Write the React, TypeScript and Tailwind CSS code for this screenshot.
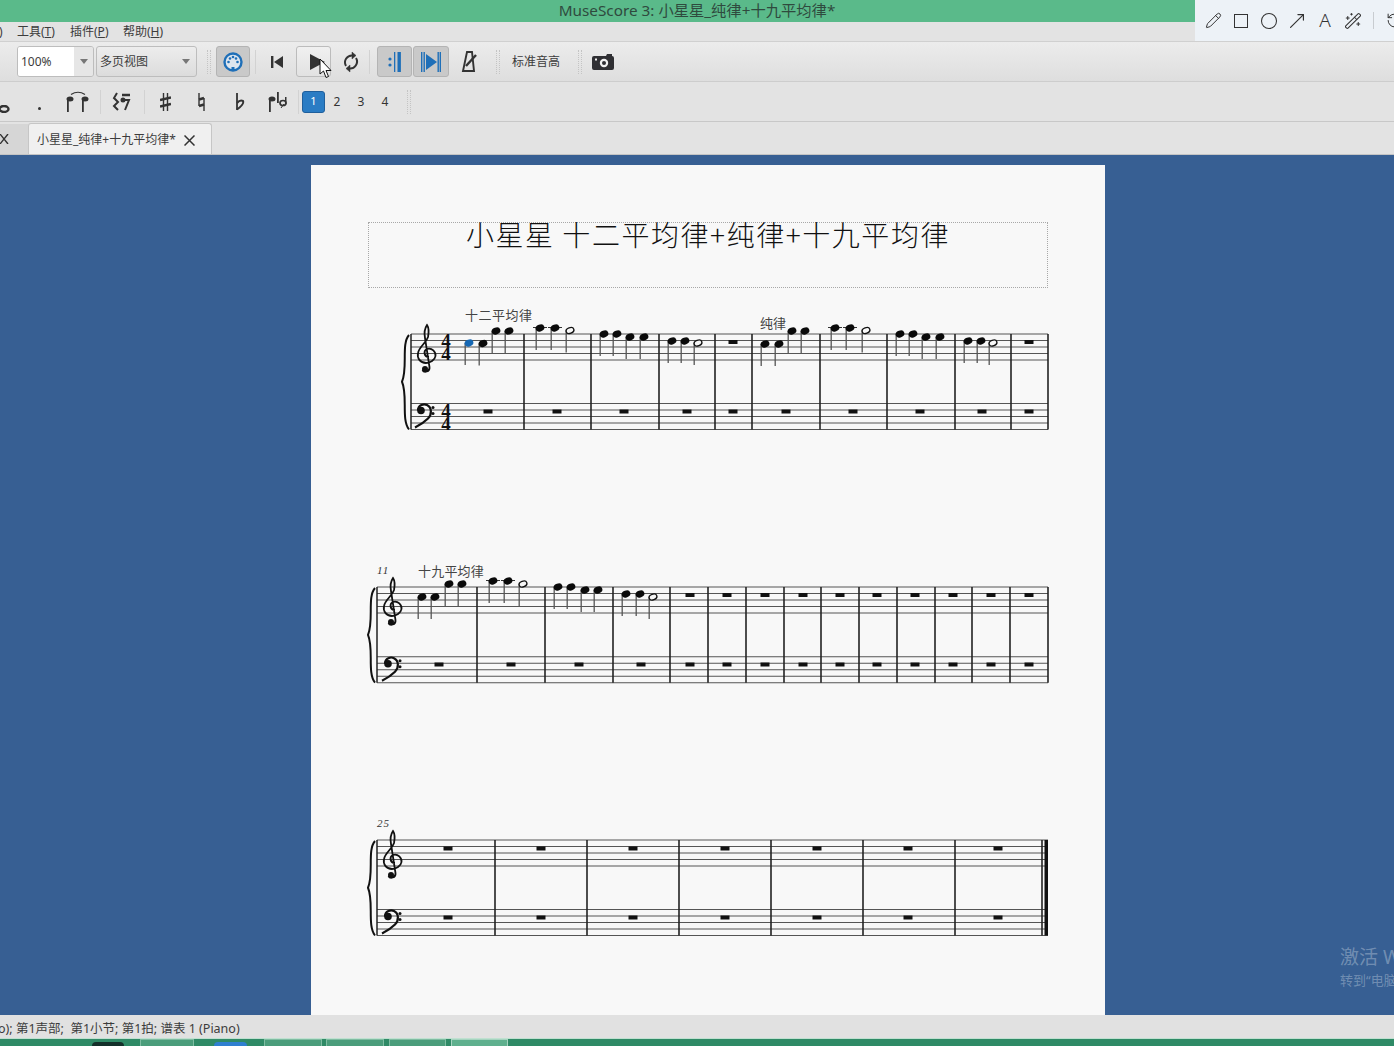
import { Circle, MoveUpRight, Pencil, RotateCcw, WandSparkles } from "lucide-react";

type N = [number, number, boolean?];

const T = ({ x, t }: { x: number; t: number }) => (
  <g transform={`translate(${x} ${t})`} fill="none" stroke="#111">
    <path strokeWidth="1.800" d="M2 23C-3 23-4 17 0 15C5 13.500 9 18 8.500 22C8 26 3 29-1 29C-7 29-10 24-9 19C-8 13-1 9 1 3C2-2 2-6 0-9C-2-6-3-1-2 4L2.500 33C3 38-3 39-4.500 36" />
    <circle cx="-2" cy="35" r="3" fill="#111" stroke="none" />
  </g>
);
const B = ({ x, t }: { x: number; t: number }) => (
  <g transform={`translate(${x} ${t})`} fill="#111">
    <path fill="none" stroke="#111" strokeWidth="2.200" d="M-3 7C-3 1 3 0 6 1.500C11 4 11 11 7 15C3 19-2 22-6 24" />
    <circle cx="0" cy="7" r="3.800" />
    <circle cx="12" cy="4" r="1.500" />
    <circle cx="12" cy="10" r="1.500" />
  </g>
);

function System(props: {
  top: number;
  height: number;
  t: number;
  b: number;
  x0: number;
  bars: number[];
  notes: N[];
  halves: N[];
  rests: number[];
  restY: number;
  bassRests: number[];
  bassY: number;
  clefX: number;
  bassX: number;
  final?: boolean;
  time?: boolean;
  mt: string;
  children?: React.ReactNode;
}) {
  const { t, b, x0 } = props;
  const lines = [0, 1, 2, 3, 4];
  return (
    <svg
      className={`block ${props.mt}`}
      width="794"
      height={props.height}
      viewBox={`311 ${props.top} 794 ${props.height}`}
    >
      {lines.map((i) => (
        <g key={i} stroke="#555" strokeWidth="1.100">
          <line x1={x0} x2="1048" y1={t + i * 6.5} y2={t + i * 6.5} />
          <line x1={x0} x2="1048" y1={b + i * 6.5} y2={b + i * 6.5} />
        </g>
      ))}
      <line x1={x0} x2={x0} y1={t} y2={b + 26} stroke="#222" strokeWidth="1.500" />
      {props.bars.map((x) => (
        <line key={x} x1={x} x2={x} y1={t} y2={b + 26} stroke="#222" strokeWidth="1.600" />
      ))}
      {props.final && <rect x="1044.5" y={t} width="3.5" height={b + 26 - t} fill="#111" />}
      <path
        d={`M${x0 - 2} ${t + 1}C${x0 - 10} ${t + 10} ${x0 - 3} ${t + 34} ${x0 - 9} ${(t + b + 26) / 2}C${x0 - 3} ${b - 8} ${x0 - 10} ${b + 16} ${x0 - 2} ${b + 26}`}
        fill="none"
        stroke="#111"
        strokeWidth="2"
      />
      <T x={props.clefX} t={t} />
      <B x={props.bassX} t={b} />
      {props.time &&
        [t + 13, t + 26, b + 13, b + 26].map((y) => (
          <text key={y} x="446" y={y} textAnchor="middle" fontFamily="'Liberation Serif',serif" fontWeight="700" fontSize="19" fill="#111">
            4
          </text>
        ))}
      {props.notes.map(([x, y, blue]) => (
        <g key={x}>
          <line x1={x - 3.8} x2={x - 3.8} y1={y} y2={y + 22} stroke="#555" strokeWidth="1.300" />
          {y < t - 3 && <line x1={x - 7} x2={x + 7} y1={t - 6.5} y2={t - 6.5} stroke="#333" />}
          <ellipse cx={x} cy={y} rx="4.500" ry="3.400" transform={`rotate(-20 ${x} ${y})`} fill={blue ? "#1668b4" : "#0a0a0a"} />
        </g>
      ))}
      {props.halves.map(([x, y]) => (
        <g key={x}>
          <line x1={x - 3.8} x2={x - 3.8} y1={y} y2={y + 22} stroke="#555" strokeWidth="1.300" />
          <ellipse cx={x} cy={y} rx="4" ry="2.800" transform={`rotate(-20 ${x} ${y})`} fill="#f8f8f8" stroke="#111" strokeWidth="1.400" />
        </g>
      ))}
      {props.rests.map((x) => (
        <rect key={x} x={x - 4.5} y={props.restY - 2} width="9" height="4" fill="#111" />
      ))}
      {props.bassRests.map((x) => (
        <rect key={x} x={x - 4.5} y={props.bassY - 2} width="9" height="4" fill="#111" />
      ))}
      {props.children}
    </svg>
  );
}

const Grip = ({ className = "" }: { className?: string }) => (
  <div className={`h-[24px] w-[4px] border-x border-dotted border-[#c4c4c4] ${className}`} />
);
const Sep = ({ className = "" }: { className?: string }) => <div className={`h-[24px] w-px bg-[#d2d2d2] ${className}`} />;

const labelFont = "'Noto Sans CJK SC',sans-serif";

export default function App() {
  return (
    <div className="relative flex h-[1046px] w-[1394px] flex-col overflow-hidden bg-[#e3e3e3] font-['Noto_Sans','Noto_Sans_CJK_SC',sans-serif] text-[#3c3c3c]">
      {/* title */}
      <div className="flex h-[22px] shrink-0 items-center justify-center bg-[#5aba8a] pb-[1px] text-[15.300px] leading-none text-[#2f4a3e]">
        MuseScore 3: 小星星_纯律+十九平均律*
      </div>
      {/* menu */}
      <div className="flex h-[20px] shrink-0 items-center border-b border-[#d0d0d0] text-[12px] leading-none">
        <span className="-ml-[1px] w-[18px]">)</span>
        <span className="w-[53px]">工具(<u>T</u>)</span>
        <span className="w-[53px]">插件(<u>P</u>)</span>
        <span>帮助(<u>H</u>)</span>
      </div>
      {/* toolbar */}
      <div className="flex h-[40px] shrink-0 items-center border-b border-[#cdcdcd] bg-gradient-to-b from-[#ececec] to-[#dedede]">
        <div className="ml-[17px] flex h-[31px] w-[77px] overflow-hidden rounded-[3px] border border-[#bdbdbd] text-[12px]">
          <div className="flex w-[56px] items-center bg-white pl-[3px]">100%</div>
          <div className="flex flex-1 items-center justify-center bg-[#e6e6e6]">
            <div className="h-0 w-0 border-x-[4px] border-t-[5px] border-x-transparent border-t-[#777]" />
          </div>
        </div>
        <div className="ml-[2px] flex h-[31px] w-[101px] items-center justify-between rounded-[3px] border border-[#bdbdbd] bg-gradient-to-b from-[#ededed] to-[#dcdcdc] pl-[3px] pr-[6px] text-[12px]">
          多页视图
          <div className="h-0 w-0 border-x-[4px] border-t-[5px] border-x-transparent border-t-[#777]" />
        </div>
        <Grip className="ml-[10px]" />
        <div className="ml-[5px] flex h-[31px] w-[34px] items-center justify-center rounded-[3px] border border-[#b4b4b4] bg-[#c9c9c9]">
          <svg width="22" height="22" viewBox="0 0 22 22">
            <circle cx="11" cy="11" r="8.5" fill="#dfe6ee" stroke="#1f6fb8" strokeWidth="2.4" />
            <g fill="#1f6fb8">
              <circle cx="6.5" cy="11" r="1.3" />
              <circle cx="15.5" cy="11" r="1.3" />
              <circle cx="8" cy="7.5" r="1.3" />
              <circle cx="14" cy="7.5" r="1.3" />
              <circle cx="11" cy="6" r="1.3" />
              <rect x="9.5" y="16" width="3" height="3" />
            </g>
          </svg>
        </div>
        <Sep className="ml-[5px]" />
        <svg className="ml-[14px]" width="14" height="14" viewBox="0 0 14 14">
          <rect x="1" y="1" width="2.4" height="12" fill="#333" />
          <path d="M13 1V13L4 7Z" fill="#333" />
        </svg>
        <div className="ml-[12px] flex h-[31px] w-[35px] items-center rounded-[3px] border border-[#bcbcbc] bg-gradient-to-b from-[#f0f0f0] to-[#e2e2e2] pl-[13px]">
          <svg width="15" height="16" viewBox="0 0 15 16">
            <path d="M0 0V16L15 8Z" fill="#333" />
          </svg>
        </div>
        <svg className="ml-[10px]" width="20" height="22" viewBox="0 0 20 22" fill="none" stroke="#333" strokeWidth="2">
          <path d="M5 15A7 7 0 0 1 12 4.5" />
          <path d="M15 7A7 7 0 0 1 8 17.500" />
          <path d="M11 1L15 4.500L11 8Z" fill="#333" strokeWidth="0.5" />
          <path d="M9 14L5 17.500L9 21Z" fill="#333" strokeWidth="0.5" />
        </svg>
        <Sep className="ml-[8px]" />
        <div className="ml-[7px] flex h-[31px] w-[35px] items-center justify-center rounded-[3px] border border-[#b4b4b4] bg-[#c9c9c9]">
          <svg width="14" height="20" viewBox="0 0 14 20" fill="#1f6fb8">
            <circle cx="2" cy="7" r="1.6" />
            <circle cx="2" cy="13" r="1.6" />
            <rect x="6" y="0" width="1.3" height="20" />
            <rect x="9.500" y="0" width="3.4" height="20" />
          </svg>
        </div>
        <div className="ml-[1px] flex h-[31px] w-[36px] items-center justify-center rounded-[3px] border border-[#b4b4b4] bg-[#c9c9c9]">
          <svg width="20" height="20" viewBox="0 0 20 20" fill="#1f6fb8">
            <rect x="0" y="0" width="1.4" height="20" />
            <rect x="2.500" y="0" width="1.4" height="20" />
            <rect x="16.500" y="0" width="1.4" height="20" />
            <rect x="18.600" y="0" width="1.4" height="20" />
            <path d="M5 2V18L16 10Z" />
          </svg>
        </div>
        <svg className="ml-[12px]" width="17" height="22" viewBox="0 0 17 22" fill="none" stroke="#333" strokeWidth="1.9">
          <path d="M6 1H11L13 20H2Z" />
          <path d="M5 15L15 4" strokeWidth="2.400" />
        </svg>
        <Grip className="ml-[18px]" />
        <span className="ml-[12px] w-[48px] text-[12px]">标准音高</span>
        <Grip className="ml-[18px]" />
        <svg className="ml-[10px]" width="22" height="16" viewBox="0 0 22 16">
          <path d="M2 2H14L15 0H20V2Q22 2 22 4V14Q22 16 20 16H2Q0 16 0 14V4Q0 2 2 2Z" fill="#2f2f33" />
          <circle cx="12" cy="9" r="4.200" fill="#f0f0f0" />
          <circle cx="12" cy="9" r="2" fill="#2f2f33" />
          <rect x="3" y="4.500" width="2" height="2" fill="#f0f0f0" />
        </svg>
      </div>
      {/* note input */}
      <div className="flex h-[40px] shrink-0 items-center border-b border-[#c8c8c8] bg-[#e3e3e3] text-[#333]">
        <svg className="mt-[14px]" width="10" height="8" viewBox="0 0 10 8">
          <ellipse cx="4" cy="4" rx="4.500" ry="3" fill="none" stroke="#333" strokeWidth="2.400" />
        </svg>
        <div className="ml-[28px] mt-[14px] h-[3px] w-[3px] rounded-full bg-[#333]" />
        <svg className="ml-[24px]" width="26" height="22" viewBox="0 0 26 22" fill="#333">
          <path d="M6 3.500Q13-1 20 3.500" fill="none" stroke="#333" strokeWidth="1.200" />
          <ellipse cx="5" cy="8" rx="3.500" ry="2.500" />
          <ellipse cx="20" cy="8" rx="3.500" ry="2.500" />
          <rect x="2" y="8" width="1.800" height="13" />
          <rect x="17" y="8" width="1.800" height="13" />
        </svg>
        <Sep className="ml-[9px]" />
        <svg className="ml-[10px]" width="20" height="20" viewBox="0 0 20 20" fill="none" stroke="#333" strokeWidth="2">
          <path d="M6 1L3 6L7 10L3 14L7 18" />
          <path d="M11 3H19" strokeWidth="2.500" />
          <path d="M11 8H18L14 18" />
          <circle cx="12" cy="8" r="1.500" fill="#333" />
        </svg>
        <Sep className="ml-[13px]" />
        <svg className="ml-[15px]" width="11" height="18" viewBox="0 0 11 18" fill="none" stroke="#333">
          <path d="M3.500 0V18M7.500 0V18" strokeWidth="1.400" />
          <path d="M0 7L11 4.500M0 13.500L11 11" strokeWidth="2.600" />
        </svg>
        <svg className="ml-[27px]" width="7" height="18" viewBox="0 0 7 18" fill="none" stroke="#333">
          <path d="M1 0V13M6 5V18" strokeWidth="1.400" />
          <path d="M1 6.500L6 5M1 13L6 11.500" strokeWidth="2.600" />
        </svg>
        <svg className="ml-[31px]" width="9" height="18" viewBox="0 0 9 18" fill="none" stroke="#333">
          <path d="M1 0V17" strokeWidth="1.800" />
          <path d="M1 10Q4 6.500 7 8Q8.500 11 1 16.500" strokeWidth="2" />
        </svg>
        <svg className="ml-[23px]" width="20" height="22" viewBox="0 0 20 22" fill="#333">
          <rect x="1" y="8" width="1.800" height="13" />
          <ellipse cx="4" cy="8" rx="3.500" ry="2.500" />
          <rect x="9" y="1" width="1.800" height="11" />
          <ellipse cx="15" cy="12" rx="3" ry="2.500" fill="none" stroke="#333" strokeWidth="1.700" />
          <path d="M13 17L16 13" stroke="#333" />
          <rect x="17" y="6" width="1.500" height="7" />
        </svg>
        <Sep className="ml-[10px]" />
        <div className="ml-[3px] flex h-[22px] w-[23px] items-center justify-center rounded-[3px] border border-[#1f5f9c] bg-[#2a7cc4] text-[11px] text-white">1</div>
        <span className="w-[24px] text-center text-[12px]">2</span>
        <span className="w-[24px] text-center text-[12px]">3</span>
        <span className="w-[24px] text-center text-[12px]">4</span>
        <Grip className="ml-[10px]" />
      </div>
      {/* tabs */}
      <div className="flex h-[33px] shrink-0 items-end border-b border-[#c4c4c4] bg-[#e3e3e3]">
        <div className="flex h-[30px] w-[28px] items-center bg-[#d6d6d6] pb-[1px]">
          <svg width="9" height="10" viewBox="0 0 9 10" stroke="#333" strokeWidth="1.400">
            <path d="M0 0L8 10M8 0L0 10" />
          </svg>
        </div>
        <div className="flex h-[31px] w-[184px] items-center rounded-t-[3px] border border-b-0 border-[#c6c6c6] bg-[#f0f0f0] pl-[8px] pt-[2px] text-[12px]">
          小星星_纯律+十九平均律*
          <svg className="ml-[8px]" width="11" height="11" viewBox="0 0 11 11" stroke="#333" strokeWidth="1.500">
            <path d="M0.500 0.500L10.500 10.500M10.500 0.500L0.500 10.500" />
          </svg>
        </div>
      </div>
      {/* canvas */}
      <div className="flex min-h-0 flex-1 bg-[#375f93] pl-[311px] pt-[10px]">
        <div className="w-[794px] overflow-hidden bg-[#f8f8f8] pt-[57px]">
          <div className="ml-[57px] h-[66px] w-[680px] border border-dotted border-[#a8a8a8] text-center text-[28px] leading-[22px] font-light tracking-[1.550px] text-[#111]">
            <span style={{ fontFamily: labelFont }}>小星星 十二平均律+纯律+十九平均律</span>
          </div>
          <System
            mt="mt-[12px]"
            top={300}
            height={140}
            t={334}
            b={403.500}
            x0={411}
            bars={[524, 591, 659, 715, 752, 820, 887, 955, 1011, 1048]}
            notes={[
              [469, 343, true], [483, 343.500], [496, 331], [509, 331], [540, 328], [555, 328],
              [604, 334], [617, 334], [630, 337], [644, 337], [672, 341], [685, 341],
              [765, 344], [779, 344], [792, 331], [805, 331], [835, 328], [850, 328],
              [900, 334], [913, 334], [926, 337], [940, 337], [968, 341], [981, 341],
            ]}
            halves={[[570, 330.500], [698, 343], [866, 330.500], [993, 343]]}
            rests={[733, 1029]}
            restY={342}
            bassRests={[488, 557, 624, 687, 733, 786, 853, 920, 982, 1029]}
            bassY={411.500}
            clefX={427}
            bassX={421}
            time
          >
            <text x="465" y="320" fontFamily={labelFont} fontSize="13" letterSpacing="0.500" fill="#444">十二平均律</text>
            <text x="760" y="328" fontFamily={labelFont} fontSize="13" fill="#444">纯律</text>
          </System>
          <System
            mt="mt-[115px]"
            top={555}
            height={140}
            t={587}
            b={656.700}
            x0={377}
            bars={[477, 545, 613, 670, 708, 746, 784, 821, 859, 897, 935, 972, 1010, 1048]}
            notes={[
              [422, 597], [435, 597], [449, 584], [462, 584], [493, 581], [508, 581],
              [558, 587], [571, 587], [585, 590], [598, 590], [626, 594], [640, 594],
            ]}
            halves={[[523, 584], [653, 597]]}
            rests={[690, 727, 765, 803, 840, 877, 915, 953, 991, 1029]}
            restY={595}
            bassRests={[439, 511, 579, 641, 690, 727, 765, 803, 840, 877, 915, 953, 991, 1029]}
            bassY={664.500}
            clefX={393}
            bassX={388}
          >
            <text x="377" y="574" fontFamily="'Liberation Serif',serif" fontStyle="italic" fontSize="11" letterSpacing="1" fill="#333">11</text>
            <text x="418" y="576" fontFamily={labelFont} fontSize="13" letterSpacing="0.200" fill="#444">十九平均律</text>
          </System>
          <System
            mt="mt-[115px]"
            top={810}
            height={135}
            t={840}
            b={909.500}
            x0={377}
            bars={[495, 587, 679, 771, 863, 955, 1042]}
            notes={[]}
            halves={[]}
            rests={[448, 541, 633, 725, 817, 908, 998]}
            restY={848.500}
            bassRests={[448, 541, 633, 725, 817, 908, 998]}
            bassY={917.500}
            clefX={393}
            bassX={388}
            final
          >
            <text x="377" y="827" fontFamily="'Liberation Serif',serif" fontStyle="italic" fontSize="11" letterSpacing="1" fill="#333">25</text>
          </System>
        </div>
      </div>
      {/* status */}
      <div className="flex h-[23px] shrink-0 items-center overflow-hidden whitespace-pre bg-[#e1e1e1] pt-[5px] text-[12.500px] text-[#3c3c3c]">
        <span className="-ml-[2px]">o); 第1声部;  第1小节; 第1拍; 谱表 1 (Piano)</span>
      </div>
      {/* taskbar */}
      <div className="flex h-[8px] shrink-0 items-end border-t border-[#bfe0d0] bg-[#2f8a66]">
        <div className="ml-[92px] h-[4px] w-[32px] rounded-t-[8px] bg-[#14302a]" />
        <div className="ml-[16px] h-[7px] w-[54px] border border-b-0 border-[#7fbda2] bg-[#4b9d7b]" />
        <div className="ml-[20px] h-[4px] w-[33px] rounded-t-[8px] bg-[#2f7fd0]" />
        <div className="ml-[17px] h-[7px] w-[58px] border border-b-0 border-[#7fbda2] bg-[#4b9d7b]" />
        <div className="ml-[4px] h-[7px] w-[58px] border border-b-0 border-[#7fbda2] bg-[#4b9d7b]" />
        <div className="ml-[5px] h-[7px] w-[57px] border border-b-0 border-[#7fbda2] bg-[#4b9d7b]" />
        <div className="ml-[5px] h-[7px] w-[57px] border border-b-0 border-[#a6d4c0] bg-[#5fb08e]" />
      </div>
      {/* snipping overlay */}
      <div className="absolute right-0 top-0 flex h-[41px] w-[199px] items-center overflow-hidden bg-[#edf2f7] pl-[4px] text-[#333]">
        <div className="flex w-[28px] shrink-0 justify-center"><Pencil size={17} strokeWidth={1.4} /></div>
        <div className="flex w-[28px] shrink-0 justify-center"><div className="h-[14px] w-[14px] border-[1.5px] border-[#333]" /></div>
        <div className="flex w-[28px] shrink-0 justify-center"><Circle size={18} strokeWidth={1.4} /></div>
        <div className="flex w-[28px] shrink-0 justify-center"><MoveUpRight size={22} strokeWidth={1.3} /></div>
        <div className="flex w-[28px] shrink-0 justify-center text-[19px] font-light leading-none">A</div>
        <div className="flex w-[28px] shrink-0 justify-center"><WandSparkles size={18} strokeWidth={1.4} /></div>
        <div className="ml-[6px] h-[17px] w-px shrink-0 bg-[#c8ccd0]" />
        <RotateCcw size={17} strokeWidth={1.4} className="ml-[12px] shrink-0" />
      </div>
      {/* cursor */}
      <svg className="absolute left-[319px] top-[58px]" width="13" height="21" viewBox="0 0 13 21">
        <path d="M1 1V16L4.500 13L7 19.500L9.500 18.500L7 12.500H12Z" fill="#fff" stroke="#111" strokeWidth="1" />
      </svg>
      {/* watermark */}
      <div className="absolute left-[1340px] top-[945px] w-[54px] overflow-hidden whitespace-nowrap text-white/30">
        <div className="text-[19px] leading-[24px]">激活 Windows</div>
        <div className="mt-[2px] text-[13px] leading-[18px]">转到“电脑设置”以激活 Windows。</div>
      </div>
    </div>
  );
}
